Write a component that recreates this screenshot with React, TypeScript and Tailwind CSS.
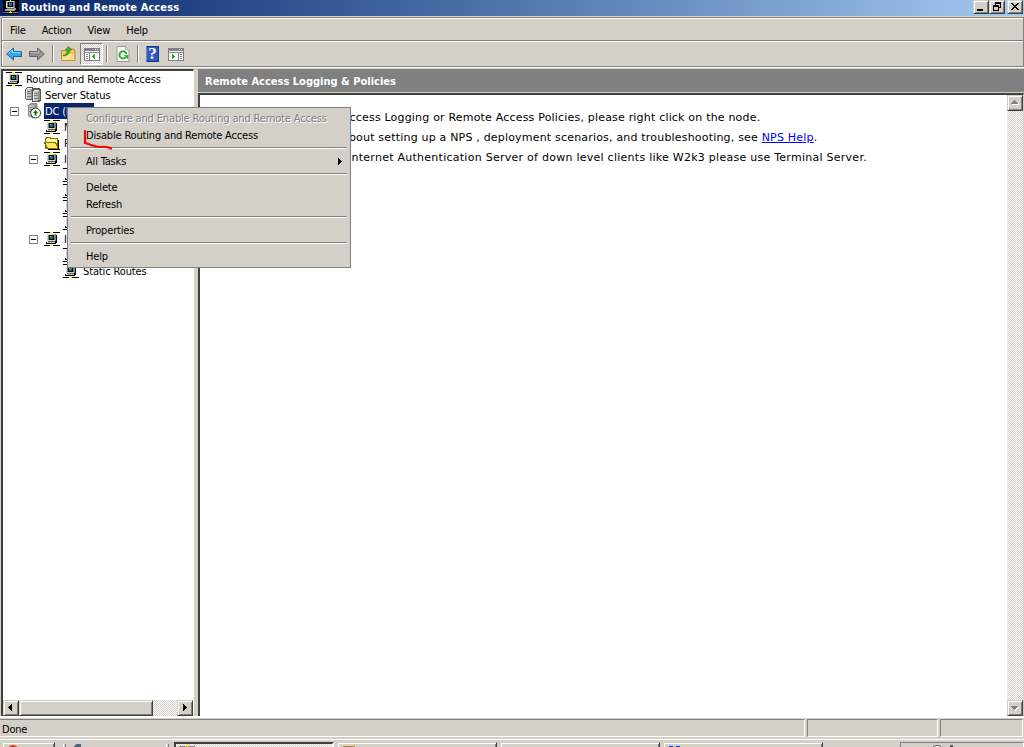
import type { ReactNode } from "react";
import clsx from "clsx";

const raised =
  "border border-t-[#d4d0c8] border-l-[#d4d0c8] border-r-[#404040] border-b-[#404040] shadow-[inset_1px_1px_0_#fff,inset_-1px_-1px_0_#808080]";
const checker =
  "bg-[#ebe9e5] bg-[conic-gradient(#d4d0c8_25%,#fff_0_50%,#d4d0c8_0_75%,#fff_0)] bg-[length:2px_2px]";

function NetworkIcon({ dark = false, className }: { dark?: boolean; className?: string }) {
  return (
    <svg viewBox="0 0 16 16" shapeRendering="crispEdges" className={clsx("h-4 w-4 shrink-0", className)}>
      {dark && <path fill="#000" d="M0 0h16v16H0z" />}
      <path fill={dark ? "#777" : "#000"} d="M0 1h16v1H0zM0 14h16v1H0z" />
      <path fill="#ff0" d="M6 1h3v1H6zM7 2h1v1H7zM6 14h3v1H6zM7 13h1v1H7z" />
      <path fill="#808080" d="M3 3h9v7H3z" />
      <path fill="#d4d0c8" d="M3 3h8v1H3zM3 4h1v6H3zM4 9h7v1H4z" />
      <path fill="#000" d="M5 4h5v5H5zM12 4h1v6h-1z" />
      <path fill="#008080" d="M6 5h3v3H6z" />
      <path fill="#5fd0d0" d="M6 5h1v1H6z" />
      <path fill="#c0c0c0" d="M3 11h8v1H3z" />
      <path fill={dark ? "#999" : "#000"} d="M2 12h10v1H2zM11 10h2v2h-2zM2 11h1v1H2z" />
      <path fill="#606060" d="M4 10h7v1H4z" />
    </svg>
  );
}

function ServersIcon() {
  return (
    <svg viewBox="0 0 16 16" shapeRendering="crispEdges" className="h-4 w-4 shrink-0">
      <path fill="#555" d="M2 0h6v1h7v1h1v12h-1v1H7v-2H1v-1H0V2h1V1h1z" />
      <path fill="#c4c4c4" d="M1 2h5v10H1zM8 4h5v10H8z" />
      <path fill="#eee" d="M2 1h5v1H2zM9 3h5v1H9zM1 3h1v9H1zM8 5h1v9H8z" />
      <path fill="#777" d="M2 4h4v1H2zM2 6h4v1H2zM2 9h4v1H2zM9 6h4v1H9zM9 8h4v1H9zM9 11h4v1H9z" />
      <path fill="#909090" d="M6 2h1v10H6zM13 4h2v9h-2z" />
    </svg>
  );
}

function ServerUpIcon() {
  return (
    <svg viewBox="0 0 16 16" className="h-4 w-4 shrink-0">
      <path fill="#999" stroke="#666" strokeWidth=".7" d="M1.5 2 4 .5h6V13l-3 2-5.5-2z" />
      <path fill="#ccc" d="M2 2.5h5v10H2z" />
      <path stroke="#777" d="M2.5 4.5h4M2.5 6.5h4M2.5 8.5h4" />
      <circle cx="8.6" cy="10" r="4.9" fill="#fff" stroke="#222" strokeWidth=".9" />
      <path fill="#008000" d="m8.6 7 2.7 3H9.6v2.5h-2V10H6z" />
    </svg>
  );
}

function FolderIcon() {
  return (
    <svg viewBox="0 0 16 16" shapeRendering="crispEdges" className="h-4 w-4 shrink-0">
      <path fill="#fff799" stroke="#867000" d="M1.5 3.5h1v-1h4v1h7v10h-12z" />
      <path fill="#ffe868" stroke="#867000" d="M.5 7.5h11l3 6h-11z" />
      <path fill="#000" d="M4 14h12v1H4zM14 5h1v9h-1z" />
    </svg>
  );
}

function Expander() {
  return (
    <svg viewBox="0 0 9 9" shapeRendering="crispEdges" className="h-[9px] w-[9px] shrink-0">
      <path fill="#808080" d="M0 0h9v9H0z" />
      <path fill="#fff" d="M1 1h7v7H1z" />
      <path fill="#000" d="M2 4h5v1H2z" />
    </svg>
  );
}

function Triangle({ direction, disabled = false }: { direction: "up" | "down" | "left" | "right"; disabled?: boolean }) {
  const shapes = {
    up: "M3 1h1v1H3zM2 2h3v1H2zM1 3h5v1H1zM0 4h7v1H0z",
    down: "M0 2h7v1H0zM1 3h5v1H1zM2 4h3v1H2zM3 5h1v1H3z",
    left: "M4 0h1v7H4zM3 1h1v5H3zM2 2h1v3H2zM1 3h1v1H1z",
    right: "M2 0h1v7H2zM3 1h1v5H3zM4 2h1v3H4zM5 3h1v1H5z",
  };
  return (
    <svg viewBox="0 0 8 8" shapeRendering="crispEdges" className="h-2 w-2">
      {disabled && <path d={shapes[direction]} fill="#fff" transform="translate(1 1)" />}
      <path d={shapes[direction]} fill={disabled ? "#808080" : "#000"} />
    </svg>
  );
}

function ArrowButton({ direction, disabled = false }: { direction: "up" | "down" | "left" | "right"; disabled?: boolean }) {
  return (
    <button type="button" className={clsx("flex h-4 w-4 shrink-0 items-center justify-center bg-[#d4d0c8]", raised)}>
      <Triangle direction={direction} disabled={disabled} />
    </button>
  );
}

function CaptionButton({ children }: { children: ReactNode }) {
  return (
    <button type="button" className={clsx("flex h-3.5 w-4 items-start justify-center bg-[#d4d0c8]", raised)}>
      <svg viewBox="0 0 12 12" shapeRendering="crispEdges" className="h-3 w-3 shrink-0">{children}</svg>
    </button>
  );
}

function TitleBar() {
  return (
    <div className="flex h-4 shrink-0 items-start bg-linear-to-r from-[#0a246a] to-[#a6caf0] pr-px pl-[3px]">
      <NetworkIcon dark className="-mt-0.5" />
      <span className="ml-0.5 w-[300px] text-[11px] leading-[15px] font-bold tracking-[0.1px] text-white">
        Routing and Remote Access
      </span>
      <div className="ml-auto flex">
        <CaptionButton>
          <path d="M2 8h6v2H2z" />
        </CaptionButton>
        <CaptionButton>
          <path d="M4 1h6v2H4zM4 3h1v1H4zM9 3h1v4H9zM8 6h1v1H8zM2 4h6v2H2zM2 6h1v4H2zM7 6h1v4H7zM3 9h4v1H3z" />
        </CaptionButton>
        <div className="ml-0.5">
          <CaptionButton>
            <path d="M2 2h2v1H2zM8 2h2v1H8zM3 3h2v1H3zM7 3h2v1H7zM4 4h4v1H4zM5 5h2v1H5zM4 6h4v1H4zM3 7h2v1H3zM7 7h2v1H7zM2 8h2v1H2zM8 8h2v1H8z" />
          </CaptionButton>
        </div>
      </div>
    </div>
  );
}

function ToolSeparator({ className }: { className: string }) {
  return <div className={clsx("h-[18px] w-0.5 shrink-0 border-r border-l border-r-white border-l-[#808080]", className)} />;
}

function PaneIcon({ side }: { side: "left" | "right" }) {
  return (
    <svg viewBox="0 0 16 14" shapeRendering="crispEdges" className="h-3.5 w-4 shrink-0">
      <path fill="#808080" d="M0 0h16v13H0z" />
      <path fill="#fff" d="M1 3h14v9H1zM11 1h1v1h-1zM13 1h1v1h-1z" />
      <path fill="#888" d="M1 4h14v1H1z" />
      {side === "left" ? (
        <>
          <path fill="#808080" d="M5 5h1v8H5zM2 6h2v1H2zM2 8h2v1H2zM2 10h2v1H2z" />
          <path fill="#26a32a" d="M11 6v5h-1v-1H9V9H8V8h1V7h1V6z" />
        </>
      ) : (
        <>
          <path fill="#808080" d="M10 5h1v8h-1zM12 6h2v1h-2zM12 8h2v1h-2zM12 10h2v1h-2z" />
          <path fill="#26a32a" d="M4 6h1v1h1v1h1v1H6v1H5v1H4z" />
        </>
      )}
    </svg>
  );
}

function Toolbar() {
  return (
    <div className="flex h-6 shrink-0 items-center border-t border-white pl-1">
      <svg viewBox="0 0 16 14" className="h-3.5 w-4 shrink-0">
        <path fill="#35aae8" stroke="#1767a8" d="M.7 7 7.5 1v3.5h8v5h-8V13z" />
        <path stroke="#91dcfb" fill="none" d="m2.5 6.5 4-3.5v2.5h8" />
      </svg>
      <svg viewBox="0 0 16 14" className="ml-[7px] h-3.5 w-4 shrink-0">
        <path fill="#929292" stroke="#666" d="M15.3 7 8.5 1v3.5h-8v5h8V13z" />
        <path stroke="#bbb" fill="none" d="M1.5 5.5h8v-2" />
      </svg>
      <ToolSeparator className="ml-[7px]" />
      <svg viewBox="0 0 16 16" className="ml-1.5 h-4 w-4 shrink-0">
        <path fill="#f4c65b" stroke="#b98220" strokeWidth=".8" d="M1.5 4.5H6L7.5 3H14v2h1v9.5H1.5z" />
        <path fill="#ffe092" d="M2 8h12v6H2z" />
        <path fill="#3caf25" stroke="#25821c" strokeWidth=".5" d="M3 9c3 0 4-2 4-5H5l3.5-3.5L12 4h-2c0 4-3 6-7 6z" />
      </svg>
      <div className={clsx("ml-1 flex h-[22px] w-[23px] shrink-0 items-center justify-center border border-t-[#808080] border-l-[#808080] border-r-white border-b-white pt-0.5", checker)}>
        <PaneIcon side="left" />
      </div>
      <ToolSeparator className="ml-[3px]" />
      <svg viewBox="0 0 14 16" className="ml-2 h-4 w-3.5 shrink-0">
        <path fill="#fff" stroke="#999" d="M1 .5h8.5L13 4v11.5H1z" />
        <path fill="#ddd" stroke="#999" strokeWidth=".6" d="M9.5.5V4H13" />
        <path fill="none" stroke="#31a72b" strokeWidth="2" d="M9.7 11.2A3.6 3.6 0 1 1 10.5 8" />
        <path fill="#31a72b" d="m8 9.2 4.4-.1-.2 4.4z" />
      </svg>
      <ToolSeparator className="ml-[7px]" />
      <div className="ml-[7px] flex h-4 w-[13px] shrink-0 items-center justify-center border border-[#173486] border-l-[#7187bd] bg-[#3158c5] font-['Liberation_Serif',serif] text-[17px] leading-4 font-bold text-white">
        ?
      </div>
      <div className="ml-[9px] pt-0.5">
        <PaneIcon side="right" />
      </div>
    </div>
  );
}

type Node = { label?: string; indent: string; icon: ReactNode; expander?: boolean; selected?: boolean };

const network = <NetworkIcon />;

const nodes: Node[] = [
  { label: "Routing and Remote Access", indent: "pl-[3px]", icon: network },
  { label: "Server Status", indent: "pl-[22px]", icon: <ServersIcon /> },
  { label: "DC (local)", indent: "pl-[7px]", icon: <ServerUpIcon />, expander: true, selected: true },
  { label: "N", indent: "pl-[41px]", icon: network },
  { label: "R", indent: "pl-[41px]", icon: <FolderIcon /> },
  { label: "I", indent: "pl-[26px]", icon: network, expander: true },
  { indent: "pl-[60px]", icon: network },
  { indent: "pl-[60px]", icon: network },
  { indent: "pl-[60px]", icon: network },
  { indent: "pl-[60px]", icon: network },
  { label: "I", indent: "pl-[26px]", icon: network, expander: true },
  { indent: "pl-[60px]", icon: network },
  { label: "Static Routes", indent: "pl-[60px]", icon: network },
];

function TreePane() {
  return (
    <div className="flex w-[193px] shrink-0 flex-col border-t-2 border-r border-l-2 border-t-[#404040] border-r-white border-l-[#404040] bg-white">
      <div className="flex-1 overflow-hidden tracking-[-0.13px]">
        {nodes.map((node, i) => (
          <div key={i} className={clsx("flex h-4 items-center whitespace-nowrap", node.indent)}>
            {node.expander && (
              <span className={node.selected ? "mr-2" : "mr-1.5"}>
                <Expander />
              </span>
            )}
            {node.icon}
            {node.label && (
              <span
                className={clsx(
                  "h-4 leading-[17px]",
                  node.selected ? "ml-px w-[50px] overflow-hidden bg-[#0a246a] pl-px text-white" : "pl-1",
                )}
              >
                {node.label}
              </span>
            )}
          </div>
        ))}
      </div>
      <div className={clsx("flex h-4 shrink-0", checker)}>
        <ArrowButton direction="left" />
        <div className={clsx("h-4 w-[134px] bg-[#d4d0c8]", raised)} />
        <div className="ml-auto">
          <ArrowButton direction="right" />
        </div>
      </div>
    </div>
  );
}

function ContentPane() {
  return (
    <div className="ml-1 flex min-w-0 flex-1 flex-col">
      <div className="h-[23px] shrink-0 bg-[#808080] pl-[7px] text-[11px] leading-[25px] font-bold tracking-[0.01px] text-white">
        Remote Access Logging &amp; Policies
      </div>
      <div className="mt-px flex min-h-0 flex-1 border-t-2 border-r border-l-2 border-t-[#404040] border-r-[#d4d0c8] border-l-[#404040] bg-white">
        <div className="flex-1 pt-[13px] pl-[142px] font-['DejaVu_Sans',Verdana,sans-serif] text-[11px] leading-5 tracking-[0.19px] whitespace-nowrap">
          <p>Access Logging or Remote Access Policies, please right click on the node.</p>
          <p>
            about setting up a NPS , deployment scenarios, and troubleshooting, see{" "}
            <a href="#" className="text-[#0000ff] underline">NPS Help</a>.
          </p>
          <p className="pl-1.5 tracking-[0.26px]">
            Internet Authentication Server of down level clients like W2k3 please use Terminal Server.
          </p>
        </div>
        <div className={clsx("flex w-4 flex-col justify-between", checker)}>
          <ArrowButton direction="up" disabled />
          <ArrowButton direction="down" disabled />
        </div>
      </div>
    </div>
  );
}

function StatusBar() {
  const cell = "h-[18px] border border-t-[#808080] border-l-[#808080] border-r-white border-b-white";
  return (
    <div className="flex h-[22px] shrink-0 gap-0.5 border-t border-white pt-px pr-px">
      <div className={clsx(cell, "w-[805px] border-l-0 pl-0.5 leading-[19px]")}>Done</div>
      <div className={clsx(cell, "w-[131px]")} />
      <div className={clsx(cell, "flex-1")} />
    </div>
  );
}

function Taskbar() {
  return (
    <div className="flex h-2 shrink-0 overflow-hidden border-t border-white pt-0.5">
      <div className={clsx("ml-0.5 flex h-6 w-[53px] pt-0.5 pl-1", raised)}>
        <div className="h-4 w-3 rounded-full bg-[#d64b24]" />
      </div>
      <div className="mt-0.5 ml-2 h-6 w-[3px] border-r border-l border-r-[#808080] border-l-white bg-[#d4d0c8]" />
      <div className="mt-0.5 ml-2 h-4 w-[7px] rounded-tl bg-[#46637a]" />
      <div className="mt-0.5 ml-[85px] h-6 w-[3px] border-r border-l border-r-[#808080] border-l-white" />
      <div className={clsx("ml-[5px] h-6 w-[160px] border-2 border-[#404040] border-r-white pt-0.5 pl-[3px]", checker)}>
        <div className="flex h-4 w-4 bg-[#808080]">
          <div className="mx-auto h-px w-1 bg-[#cccc00]" />
        </div>
      </div>
      <div className={clsx("ml-[3px] h-6 w-[160px] pt-[3px] pl-[5px]", raised)}>
        <div className="h-4 w-3 bg-[#a98b2e]" />
      </div>
      <div className={clsx("ml-[3px] h-6 w-[160px]", raised)} />
      <div className={clsx("ml-[3px] flex h-6 w-[160px] gap-0.5 pt-[3px] pl-[5px]", raised)}>
        <div className="h-2 w-1 bg-[#1838c8]" />
        <div className="ml-px h-2 w-1 bg-[#1838c8]" />
      </div>
      <div className="ml-auto flex h-6 w-[124px] border border-t-[#808080] border-r-white border-l-[#808080] pt-0.5 pl-[31px]">
        <div className="h-3 w-2.5 rounded-t-sm border border-[#555] bg-white" />
        <div className="ml-2 h-3 w-[3px] bg-[#555]" />
      </div>
    </div>
  );
}

function MenuItem({ children, className }: { children: ReactNode; className?: string }) {
  return <div className={clsx("flex h-[17px] items-center pr-1 pl-4", className)}>{children}</div>;
}

function MenuSeparator() {
  return <div className="mx-px mt-[3px] mb-1 h-0.5 border-t border-b border-t-[#808080] border-b-white" />;
}

function ContextMenu() {
  return (
    <div className="absolute top-[107px] left-[67px] h-[161px] w-[284px] border border-[#808080] bg-[#d4d0c8] p-0.5 tracking-[-0.18px] whitespace-nowrap">
      <MenuItem className="tracking-[-0.15px] text-[#808080] [text-shadow:1px_1px_0_#fff]">
        Configure and Enable Routing and Remote Access
      </MenuItem>
      <MenuItem>Disable Routing and Remote Access</MenuItem>
      <MenuSeparator />
      <MenuItem className="justify-between">
        All Tasks
        <Triangle direction="right" />
      </MenuItem>
      <MenuSeparator />
      <MenuItem>Delete</MenuItem>
      <MenuItem>Refresh</MenuItem>
      <MenuSeparator />
      <MenuItem>Properties</MenuItem>
      <MenuSeparator />
      <MenuItem>Help</MenuItem>
      {/* hand-drawn red mark under "Disable" */}
      <svg viewBox="0 0 32 22" className="absolute top-[21px] left-[15px] h-[22px] w-8">
        <path fill="none" stroke="#f00" strokeWidth="2.2" strokeLinecap="round" d="M2 2v12c7 2 10 4 15 4 4-.5 8-.5 11 1.5" />
      </svg>
    </div>
  );
}

export default function App() {
  return (
    <div className="relative flex h-[747px] w-[1024px] flex-col overflow-hidden bg-[#d4d0c8] font-['DejaVu_Sans_Condensed','DejaVu_Sans',Tahoma,sans-serif] text-[11px] leading-4 tracking-[-0.2px] text-black">
      <TitleBar />
      <div className="mt-px ml-px flex h-[50px] shrink-0 flex-col border border-[#808080] shadow-[inset_1px_1px_0_#fff]">
        <nav className="flex h-[23px] shrink-0 items-center gap-4 border-b border-[#808080] pt-[3px] pl-2">
          <span>File</span>
          <span>Action</span>
          <span>View</span>
          <span>Help</span>
        </nav>
        <Toolbar />
      </div>
      <div className="h-0.5 shrink-0 border-t border-white" />
      <div className="flex h-[648px] shrink-0 border-b border-white pl-px">
        <TreePane />
        <ContentPane />
      </div>
      <StatusBar />
      <Taskbar />
      <ContextMenu />
    </div>
  );
}
